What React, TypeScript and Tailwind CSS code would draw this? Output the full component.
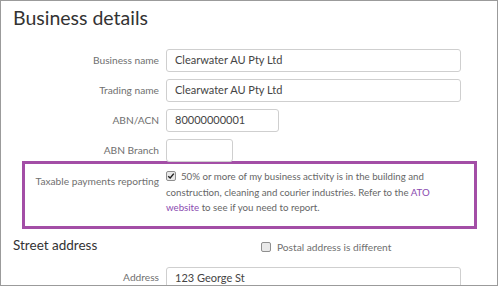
import React from "react";

const FONT = "font-['Lato',sans-serif]";

function Row({ label, children }: { label: string; children: React.ReactNode }) {
  return (
    <div className="flex items-center h-[23px] mb-[7px]">
      <label className="w-[158px] text-right text-[10.2px] text-[#707070]">{label}</label>
      <div className="ml-[7px] flex-1">{children}</div>
    </div>
  );
}

function TextInput({ value, width }: { value?: string; width: string }) {
  return (
    <div
      className={`${width} h-[23px] border border-[#cfcfcf] rounded-[3px] bg-white flex items-center pl-[8px] text-[11px] text-[#444]`}
    >
      {value}
    </div>
  );
}

function Checkbox({ checked }: { checked?: boolean }) {
  return (
    <span className="inline-flex items-center justify-center w-[10px] h-[10px] border border-[#8f8f8f] rounded-[2px] bg-[#e9e9e9] shrink-0">
      {checked && (
        <svg viewBox="0 0 10 10" className="w-[8px] h-[8px]">
          <path d="M1.5 5.2 L4 7.5 L8.5 2" fill="none" stroke="#222" strokeWidth="1.8" />
        </svg>
      )}
    </span>
  );
}

export default function App() {
  return (
    <div className={`${FONT} w-[498px] h-[286px] border border-[#9b9b9b] bg-white overflow-hidden`}>
      <h1 className="pl-[12px] pt-[4px] text-[19.5px] leading-[26px] text-[#333]">Business details</h1>

      <div className="mt-[18px]">
        <Row label="Business name">
          <TextInput value="Clearwater AU Pty Ltd" width="w-[295px]" />
        </Row>
        <Row label="Trading name">
          <TextInput value="Clearwater AU Pty Ltd" width="w-[295px]" />
        </Row>
        <Row label="ABN/ACN">
          <TextInput value="80000000001" width="w-[113px]" />
        </Row>
        <Row label="ABN Branch">
          <TextInput width="w-[67px]" />
        </Row>
      </div>

      {/* highlighted taxable payments block */}
      <div className="ml-[21px] w-[455px] -mt-[8px] border-[3px] border-[#a34ea6] pt-[5px] pb-[10px] flex">
        <div className="w-[134px] text-right text-[10.2px] leading-[15.5px] text-[#707070] pt-[5px]">
          Taxable payments reporting
        </div>
        <div className="ml-[7px] text-[9.7px] leading-[15.5px] text-[#666] whitespace-nowrap">
          <div className="flex items-center">
            <span className="mr-[5px]">
              <Checkbox checked />
            </span>
            50% or more of my business activity is in the building and
          </div>
          <div>
            construction, cleaning and courier industries. Refer to the{" "}
            <a className="text-[#8b4bb0]">ATO</a>
          </div>
          <div>
            <a className="text-[#8b4bb0]">website</a> to see if you need to report.
          </div>
        </div>
      </div>

      <div className="flex items-center mt-[7px] h-[20px]">
        <h2 className="pl-[12px] text-[13.5px] text-[#333] w-[260px]">Street address</h2>
        <div className="flex items-center gap-[6px] mt-[4px] text-[10.2px] text-[#707070]">
          <Checkbox />
          <span>Postal address is different</span>
        </div>
      </div>

      <div className="mt-[11px]">
        <Row label="Address">
          <TextInput value="123 George St" width="w-[295px]" />
        </Row>
      </div>
    </div>
  );
}
